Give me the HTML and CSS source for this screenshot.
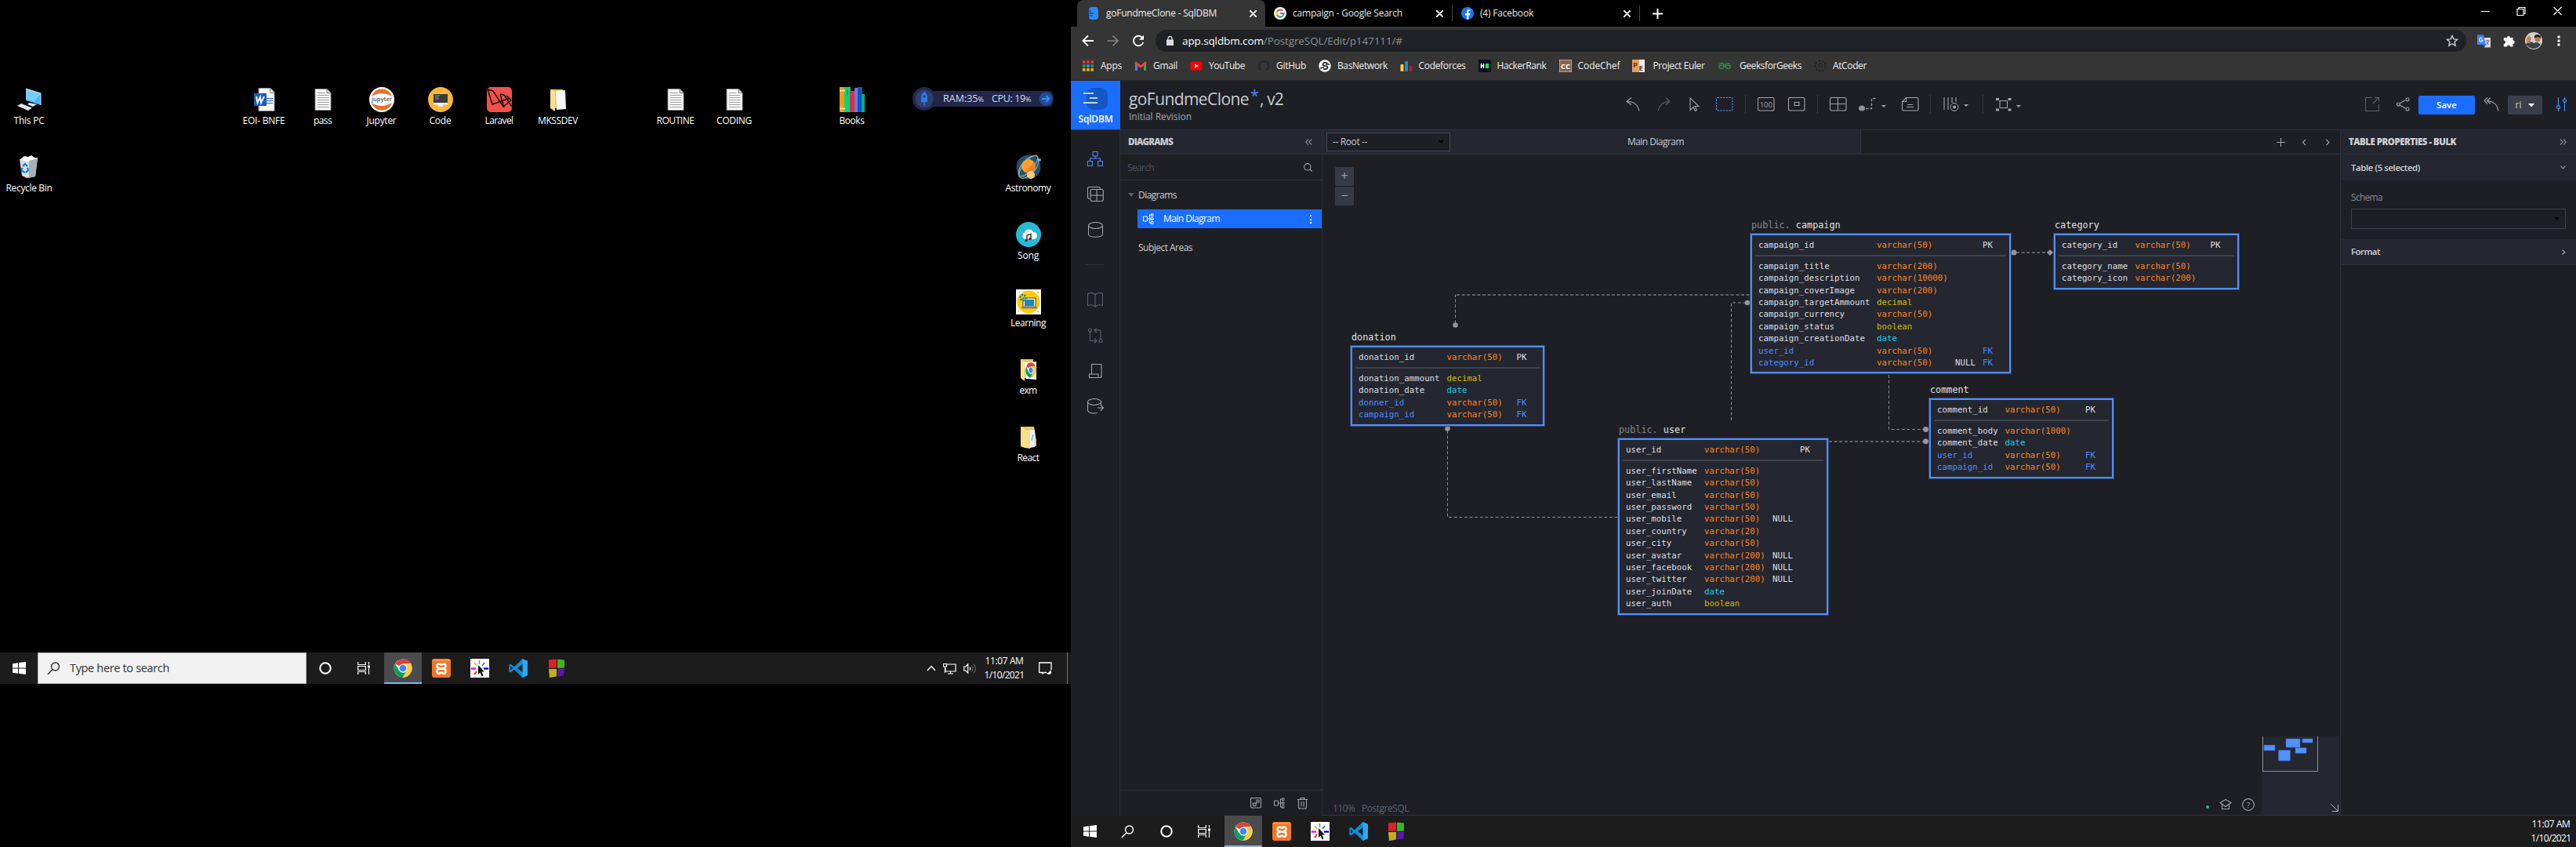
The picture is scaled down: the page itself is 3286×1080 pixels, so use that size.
FILE: index.html
```html
<!DOCTYPE html>
<html lang="en">
<head>
<meta charset="utf-8">
<title>goFundmeClone - SqlDBM</title>
<link rel="stylesheet" href="styles.css">
</head>
<body>
<svg class="defs" aria-hidden="true">
  <symbol id="i-file" viewBox="0 0 32 32"><path d="M6 2.500h15l5 5v22H6z" fill="#fafafa" stroke="#8a8a8a"/><path d="M21 2.500v5h5" fill="#ddd" stroke="#777"/><path d="M8.500 7.500h10M8.500 10.500h15M8.500 13.500h15M8.500 16.500h15M8.500 19.500h15M8.500 22.500h15M8.500 25.500h15" stroke="#9a9a9a"/></symbol>
  <symbol id="i-win" viewBox="0 0 17 16"><path d="M0 2.300 7 1.300v6.300H0zM8 1.100 17 0v7.600H8zM0 8.500h7v6.300L0 13.800zM8 8.500h9V16l-9-1.200z" fill="#fff"/></symbol>
  <symbol id="i-mag" viewBox="0 0 17 17"><circle cx="10.500" cy="6" r="5" fill="none" stroke="currentColor" stroke-width="1.400"/><path d="M7 9.700.8 16" stroke="currentColor" stroke-width="1.400"/></symbol>
  <symbol id="i-ring" viewBox="0 0 16 16"><circle cx="8" cy="8" r="6.700" fill="none" stroke="#fff" stroke-width="2"/></symbol>
  <symbol id="i-task" viewBox="0 0 16 16"><path d="M.7 0v3.500h9.600V0M.7 16v-3.500h9.600V16M.7 5.500h9.600v5H.7zM14.500 0v3.500M14.500 8v8" fill="none" stroke="#fff" stroke-width="1.200"/><path d="M13 4.500h3v3h-3z" fill="#fff"/></symbol>
  <symbol id="i-chrome" viewBox="0 0 24 24"><circle cx="12" cy="12" r="11.500" fill="#fff"/><path d="M12 12 2 6.200A11.500 11.500 0 0 1 22 6.200H12z" fill="#db4437"/><path d="M12 6.200h10A11.500 11.500 0 0 1 11.500 23.500L17 15z" fill="#ffcd40"/><path d="M2 6.200 7 15l5 2.800-2 5.500A11.500 11.500 0 0 1 2 6.200z" fill="#0f9d58"/><path d="M7 15c2 3.500 7 4 10 0l-5.500 8.500-1.500-.2z" fill="#0f9d58"/><circle cx="12" cy="12" r="5.500" fill="#f1f1f1"/><circle cx="12" cy="12" r="4.300" fill="#4285f4"/></symbol>
  <symbol id="i-xampp" viewBox="0 0 24 24"><rect width="24" height="24" rx="3" fill="#f37623"/><path d="M1 2h22" stroke="#ffa05c" stroke-width="1.500"/><path d="M12 12.500C9 12.500 6.500 12 6.500 9.500S8 6.500 9 6.500s2 1 3 1 2-1 3-1 2.500.5 2.500 3-2.500 3-5.500 3zM12 12.500c-3 0-5.500.5-5.500 3s1.500 3.500 2.500 3.500 2-1.500 3-1.500 2 1.500 3 1.500 2.500-1 2.500-3.500-2.500-3-5.500-3z" fill="#f37623" stroke="#fff" stroke-width="2.600" stroke-linejoin="round"/></symbol>
  <symbol id="i-click" viewBox="0 0 24 24"><path fill="#fff" d="M0 0h24v24H0z"/><path d="M11.500 2v5" stroke="#6a9a9a" stroke-width="1.600"/><path d="m5 5 3 4" stroke="#cc2" stroke-width="2"/><path d="m18 5-3 4" stroke="#476" stroke-width="1.600"/><path d="M1 12.500h6" stroke="#f0f" stroke-width="2.400"/><path d="M17 12.500h6" stroke="#00f" stroke-width="2.400"/><path d="m5 20 3-4" stroke="#e22" stroke-width="2"/><path d="M10 8v12l2.500-2.500 2 5 2-1-2-5H18z" fill="#111"/></symbol>
  <symbol id="i-code" viewBox="0 0 24 24"><path d="M17.500 0 24 3v18l-6.500 3L7 13.800 2.300 17.500.3 16.300v-8.600l2-1.200L7 10.200zM18 6.500 11 12l7 5.500zM2.300 9.200v5.600L5 12z" fill="#0f8bd8" fill-rule="evenodd"/><path d="M17.500 0 24 3v18l-6.500 3z" fill="#2ba7f3"/></symbol>
  <symbol id="i-blocks" viewBox="0 0 22 24"><path d="M1 1.500 11 .5v11L1 12z" fill="#d22"/><path d="m12 .5 9 1v10l-9 .5z" fill="#3bb520"/><path d="M1 13h10v9.500L2 24z" fill="#c0b020"/><path d="M12 13l9-.5-1 9-8 1z" fill="#5a16b8"/></symbol>
  <symbol id="i-flow" viewBox="0 0 14 14"><path d="M.5 4h5v6h-5zM5.500 7H9M8.500 1.500v11M8.500 2H10M8.500 12H10M9 7h1.500M10.500.8h2.500v2.700h-2.500zM10.500 5.700h2.500v2.700h-2.500zM10.500 10.500h2.500v2.700h-2.500z" fill="none" stroke="currentColor"/></symbol>
</svg>

<div class="monitors">
  <section class="desktop">
    <div class="icons">
      <div class="ico c1 r1"><svg viewBox="0 0 32 32"><path d="m12 2 19 6v15l-19-6z" fill="#49b5fb"/><path d="m12 2 19 6-8 10.500-11-3z" fill="#79cbff"/><path d="m12 2 19 6v15" fill="none" stroke="#d9e6ee"/><path d="m1 24 5-3 14 5.500-5 3.500zM16 20l10 2-5 3-7-3z" fill="#dfe3e6"/></svg><span data-w="39">This PC</span></div>
      <div class="ico c1 r2"><svg viewBox="0 0 32 32"><path d="m4 6 23-2-3 24-11 2-6-3z" fill="#d9dde0"/><path d="m5 6 5-4 5 1 4-2 4 3 4 1-5 3-10 1z" fill="#f6f7f8"/><path d="m16 8 11-3-3 23-8 2z" fill="#aab0b4"/><path d="m8 15 3-3 3 3M7 17v4l4 2M12 23l3-3-1-3" fill="none" stroke="#1583dd" stroke-width="2.400"/></svg><span data-w="59">Recycle Bin</span></div>
      <div class="ico c5 r1"><svg viewBox="0 0 32 32"><path d="M9 1.500h15l5 5v24H9z" fill="#fafafa" stroke="#8a8a8a"/><path d="M23.500 1.500v6H29" fill="#ddd" stroke="#888"/><path d="M16 14.500h11M16 17.500h11M16 20.500h11" stroke="#2a5cb8"/><path d="M3 8h16v16H3z" fill="#1e5bbd"/><path d="m6 12 1.500 8L11 12.500l1 7.500 4-8" fill="none" stroke="#fff" stroke-width="1.800"/></svg><span data-w="54">EOI- BNFE</span></div>
      <div class="ico c6 r1"><svg><use href="#i-file"/></svg><span data-w="23">pass</span></div>
      <div class="ico c7 r1"><svg viewBox="0 0 32 32"><circle cx="16" cy="16" r="16" fill="#fff"/><path d="M3 12a13.500 13.500 0 0 1 26 0Q16 4 3 12zM3 20a13.500 13.500 0 0 0 26 0Q16 28 3 20z" fill="#e8722a"/><text x="16" y="18" text-anchor="middle" font-size="7.500" font-weight="600" fill="#555">jupyter</text></svg><span data-w="38">Jupyter</span></div>
      <div class="ico c8 r1"><svg viewBox="0 0 32 32"><circle cx="16" cy="16" r="16" fill="#f6b73c"/><path d="M7 9h18v11H7z" fill="#3b3b3b"/><path d="M9 11h6M9 13h4M9 15h5" stroke="#aaa" stroke-width=".8"/><path d="M7 20h18v2.500h-6V25h-6v-2.500H7z" fill="#eee"/></svg><span data-w="28">Code</span></div>
      <div class="ico c9 r1"><svg viewBox="0 0 32 32"><rect width="32" height="32" rx="5" fill="#f4504a"/><path d="m1 3 6 19 23-8M1 3l7 2 13 20 10-8M17 9l5 17M17 9l5 1 10 15M25 11l6 6" fill="none" stroke="#16090a" stroke-width="1.500"/></svg><span data-w="36">Laravel</span></div>
      <div class="ico c10 r1"><svg viewBox="0 0 32 32"><path d="M6 3h16v24H6z" fill="#e8c55e"/><path d="m13 5 12-1 1 24-12 1z" fill="#f4f5f6"/><path d="m6 3 6 3v25l-6-4z" fill="#fbe08c"/></svg><span data-w="51">MKSSDEV</span></div>
      <div class="ico c12 r1"><svg><use href="#i-file"/></svg><span data-w="48">ROUTINE</span></div>
      <div class="ico c13 r1"><svg><use href="#i-file"/></svg><span data-w="45">CODING</span></div>
      <div class="ico c15 r1"><svg viewBox="0 0 32 32"><path d="M0 0h7v32H0z" fill="#ff9811"/><path d="M6 0h8v32H6z" fill="#00d67c"/><path d="M13 5h7v27h-7z" fill="#d9304a"/><path d="M19 1h5v31h-5z" fill="#7577e0"/><path d="M23 0h6v32h-6z" fill="#0c53bd"/><path d="M28 9h4v23h-4z" fill="#02af8e"/><path d="M0 4.500h7M0 27.500h7" stroke="#ffe2a0" stroke-width="2"/><path d="M10 4v7" stroke="#079b8a" stroke-width="2"/></svg><span data-w="32">Books</span></div>
      <div class="ico c18 r2"><svg viewBox="0 0 32 32"><circle cx="16" cy="16" r="15.500" fill="#23506b"/><g fill="none" stroke="#a8b7bf"><ellipse cx="16" cy="16" rx="17" ry="9" transform="rotate(-50 16 16)"/><ellipse cx="17" cy="15" rx="17" ry="6" transform="rotate(-50 16 16)"/></g><circle cx="16" cy="15" r="9" fill="#fba12b"/><path d="M23 10a9 9 0 0 1-11 13z" fill="#df8430"/><circle cx="19" cy="26" r="5" fill="#fcca6d"/><circle cx="30" cy="7" r="2" fill="#37b8e8"/><circle cx="8" cy="27" r="1.500" fill="#2fae4c"/></svg><span data-w="58">Astronomy</span></div>
      <div class="ico c18 r3"><svg viewBox="0 0 32 32"><circle cx="16" cy="16" r="16" fill="#27b8d8"/><path d="M11 22a5 5 0 0 1 0-9 6 6 0 0 1 11 0 4.500 4.500 0 0 1 1 9z" fill="#fff"/><path d="M14 24v-7l5-1.500v6" fill="none" stroke="#333" stroke-width="1.500"/><circle cx="13" cy="23.500" r="1.700" fill="#333"/><circle cx="18" cy="21.500" r="1.700" fill="#333"/></svg><span data-w="27">Song</span></div>
      <div class="ico c18 r4"><svg viewBox="0 0 32 32"><path d="M0 0h32v32H0z" fill="#f7f7f7"/><circle cx="16" cy="16" r="14.500" fill="#fc0"/><path d="M9 11h16v11H9z" fill="#f2f2f2" stroke="#444"/><path d="M11 13h12v8H11z" fill="#1a8ab5"/><path d="M7 22h20v2.500H7z" fill="#8a8178"/><circle cx="9" cy="10.500" r="3.500" fill="none" stroke="#1585bd" stroke-width="2.500" stroke-dasharray="2.200 1.300"/><path d="M4 3h1M27 4h2M3 28h1M27 28h2" stroke="#fc0" stroke-width="2"/></svg><span data-w="45">Learning</span></div>
      <div class="ico c18 r5"><svg viewBox="0 0 32 32"><path d="M6 3h16v24H6z" fill="#e8c55e"/><path d="m11 7 15-1v23l-13-1z" fill="#fff"/><svg x="12" y="7" width="14" height="20" preserveAspectRatio="none" viewBox="0 0 24 24" class="nested"><use href="#i-chrome"/></svg><path d="m6 3 5 3v25l-5-4z" fill="#fbe08c"/></svg><span data-w="22">exm</span></div>
      <div class="ico c18 r6"><svg viewBox="0 0 32 32"><path d="M6 3h17l3 17v8H6z" fill="#e8c566"/><path d="M17 7h7v22l-6 1z" fill="#eef0f2"/><path d="m22 13-2 8" stroke="#2a9fd8"/><path d="m6 3 7 4 5 1v23l-7-1-5-2z" fill="#fbe08c"/></svg><span data-w="28">React</span></div>
      <div class="monitor-pill">
        <svg viewBox="0 0 30 30" class="rocket"><circle cx="15" cy="15" r="15" fill="#22274a"/><circle cx="15" cy="15" r="11.500" fill="#2e3f6b"/><path d="M15 6c3 2 4 5 4 8v5h-8v-5c0-3 1-6 4-8zM14.300 19h1.400v5h-1.400z" fill="#2a7cf5"/><circle cx="15" cy="12" r="1.500" fill="#22304f"/></svg>
        <span class="ram" data-w="52">RAM:35<small>%</small></span><span class="cpu" data-w="50">CPU: 19<small>%</small></span>
        <svg viewBox="0 0 18 18" class="go"><circle cx="9" cy="9" r="8.500" fill="#214c96"/><path d="M4 9h9.500M9.500 5l4 4-4 4" fill="none" stroke="#3a8bff" stroke-width="1.800"/></svg>
      </div>
    </div>
    <footer class="taskbar">
      <span class="tb start"><svg width="17" height="16"><use href="#i-win"/></svg></span>
      <span class="search"><svg width="17" height="17"><use href="#i-mag"/></svg><span data-w="127">Type here to search</span></span>
      <span class="tb"><svg width="16" height="16"><use href="#i-ring"/></svg></span>
      <span class="tb"><svg width="16" height="16"><use href="#i-task"/></svg></span>
      <span class="tb on"><svg width="24" height="24"><use href="#i-chrome"/></svg></span>
      <span class="tb"><svg width="24" height="24"><use href="#i-xampp"/></svg></span>
      <span class="tb"><svg width="24" height="24"><use href="#i-click"/></svg></span>
      <span class="tb"><svg width="24" height="24"><use href="#i-code"/></svg></span>
      <span class="tb"><svg width="22" height="24"><use href="#i-blocks"/></svg></span>
      <span class="tray">
        <svg width="12" height="8" viewBox="0 0 12 8"><path d="m1 7 5-5.500L11 7" fill="none" stroke="#fff" stroke-width="1.300"/></svg>
        <svg width="17" height="15" viewBox="0 0 17 15"><path d="M5 2h11v9H3V7M9.500 11v3M6 14h7M.5 1.500h4v3.500h-4zM2.500 5v8" fill="none" stroke="#fff" stroke-width="1.200"/></svg>
        <svg width="17" height="15" viewBox="0 0 17 15"><path d="M.7 5h2l3-3v11l-3-3h-2zM8 5.500q1.500 2 0 4" fill="none" stroke="#fff" stroke-width="1.200"/><path d="M10.500 3.500q3 4 0 8M13 1.500q4.500 6 0 12" fill="none" stroke="#777"/></svg>
      </span>
      <span class="clock"><span data-w="49">11:07 AM</span><span data-w="51">1/10/2021</span></span>
      <svg class="note" width="17" height="17" viewBox="0 0 17 17"><path d="M10 13.500H7L5 15v-1.500H.7V1H16v9" fill="none" stroke="#fff" stroke-width="1.300"/><path d="M15 10c-1 3-3 4-5 4 1 3 7 3 6-2z" fill="#fff"/></svg>
    </footer>
  </section>

  <section class="browser">
    <header class="tabs">
      <div class="tab active"><svg width="16" height="16" viewBox="0 0 16 16"><rect x="3" width="12" height="16" rx="4" fill="#2b8cf5"/><path d="M0 5h6M2 8h7M1 11h7" stroke="#0c3a80" stroke-width="1.200"/></svg><span data-w="141">goFundmeClone - SqlDBM</span><i class="x"></i></div>
      <div class="tab"><svg width="16" height="16" viewBox="0 0 16 16"><circle cx="8" cy="8" r="8" fill="#fff"/><g fill="none" stroke-width="2"><path d="M11.300 4.800A4.600 4.600 0 0 0 4 6" stroke="#ea4335"/><path d="M4 6a4.600 4.600 0 0 0 0 4" stroke="#fbbc05"/><path d="M4 10a4.600 4.600 0 0 0 7 1.500" stroke="#34a853"/><path d="M11 11.500A4.600 4.600 0 0 0 12.600 8H8" stroke="#4285f4"/></g></svg><span data-w="140">campaign - Google Search</span><i class="x"></i></div>
      <div class="tab"><svg width="16" height="16" viewBox="0 0 16 16"><circle cx="8" cy="8" r="8" fill="#1877f2"/><path d="M7 16v-5.500H5V8h2V6.300C7 4.200 8.200 3 10 3l1.500.1v2h-1C9.500 5.100 9.300 5.700 9.300 6.500V8h2.200l-.4 2.500H9.300V16z" fill="#fff"/></svg><span data-w="68">(4) Facebook</span><i class="x"></i></div>
      <svg class="plus" width="13" height="13" viewBox="0 0 13 13"><path d="M6.500 0v13M0 6.500h13" stroke="#fff" stroke-width="2"/></svg>
      <svg class="winbtns" width="104" height="12" viewBox="0 0 104 12"><path d="M0 6.500h11M46 3.500h8v8h-8zM48 3.500v-2h8v8h-2M92.500 1l10 10M102.500 1l-10 10" fill="none" stroke="#fff" stroke-width="1.200"/></svg>
    </header>
    <div class="addr">
      <svg width="80" height="16" viewBox="0 0 80 16"><path d="M15 8H2M8 1.500 1.500 8 8 14.500" fill="none" stroke="#fff" stroke-width="1.900"/><path d="M32.500 8h13M39.500 1.500 46 8l-6.500 6.500" fill="none" stroke="#858585" stroke-width="1.700"/><path d="M77.500 4.500A6.300 6.300 0 1 0 78.300 10" fill="none" stroke="#fff" stroke-width="1.900"/><path d="M79 .8v6h-6z" fill="#fff"/></svg>
      <div class="omni"><svg width="9" height="12" viewBox="0 0 9 12"><path d="M0 4.500h9V12H0z" fill="#ddd"/><path d="M2 5V3a2.500 2.500 0 0 1 5 0v2" fill="none" stroke="#ddd" stroke-width="1.300"/></svg><span class="url" data-w="281"><b>app.sqldbm.com</b>/PostgreSQL/Edit/p147111/#</span>
        <svg class="star" width="16" height="16" viewBox="0 0 16 16"><path d="m8 1.500 1.900 4.400 4.800.4-3.600 3.200 1.100 4.700L8 11.700l-4.200 2.500 1.100-4.700L1.300 6.300l4.800-.4z" fill="none" stroke="#ccc" stroke-width="1.400"/></svg></div>
      <div class="ext">
        <svg width="17" height="17" viewBox="0 0 17 17"><path d="M7 4h10v12.500H9z" fill="#dadada"/><path d="M0 .5h8L11 13H0z" fill="#4285f4"/><path d="M8 13h3l-2 3.500z" fill="#2a4fc0"/><path d="M6.500 5.200a2.300 2.300 0 1 0 .6 2H5" fill="none" stroke="#fff" stroke-width="1.100"/><path d="M10.500 8h5M13 7v1M14.500 8c-.5 2.500-2 4-3.500 5M11.500 10l3 3" stroke="#667" fill="none"/></svg>
        <svg width="15" height="15" viewBox="0 0 15 15"><path d="M5 3a2 2 0 0 1 4 0h3.500v3.500a2 2 0 0 1 0 4.500v3.500H9a2 2 0 0 0-4 0H.8V11a2 2 0 0 0 0-4.500V3z" fill="#fff"/></svg>
        <svg width="22" height="22" viewBox="0 0 22 22"><circle cx="11" cy="11" r="11" fill="#d8ccc4"/><path d="M1 15q6-5 10-1 5-3 9 2a11 11 0 0 1-19-1z" fill="#3a4450"/><ellipse cx="16" cy="8" rx="3.500" ry="4.500" fill="#b5795a"/><path d="M12 5q3-4 8 0v3q-4-4-8 0z" fill="#1c1715"/><path d="m2 8 3-4 3 4-2 6H2z" fill="#bb8365"/></svg>
        <svg width="4" height="14" viewBox="0 0 4 14"><path d="M.5.500h3v3h-3zM.5 5.500h3v3h-3zM.5 10.500h3v3h-3z" fill="#fff"/></svg>
      </div>
    </div>
    <nav class="marks">
      <a><svg viewBox="0 0 16 16"><path d="M1 3h14" stroke="#e33b2e" stroke-width="3.500" stroke-dasharray="3.500 1.700"/><path d="M1 8h14" stroke="#3a9b4e" stroke-width="3.500" stroke-dasharray="3.500 1.700"/><path d="M1 13h14" stroke="#f3b51c" stroke-width="3.500" stroke-dasharray="3.500 1.700"/><path d="M6.200 6.300h3.400v3.400H6.200z" fill="#4285f4"/></svg><span data-w="27">Apps</span></a>
      <a><svg viewBox="0 0 16 16"><path d="M1 3v11h3V8z" fill="#4285f4"/><path d="M15 3v11h-3V8z" fill="#34a853"/><path d="M1 3.500 8 9l7-5.500" fill="none" stroke="#ea4335" stroke-width="3"/></svg><span data-w="31">Gmail</span></a>
      <a><svg viewBox="0 0 16 16"><rect x=".5" y="2.500" width="15" height="11" rx="2.500" fill="#f00"/><path d="m6.300 5.500 4.400 2.500-4.400 2.500z" fill="#fff"/></svg><span data-w="46">YouTube</span></a>
      <a><svg viewBox="0 0 16 16"><circle cx="8" cy="8" r="7.500" fill="#24292e"/><path d="M5 15v-3C2 10 3 6 4 5.500V3l2 1h4l2-1v2.500c1 1 2 5-1 6.500v3z" fill="#353535"/></svg><span data-w="38">GitHub</span></a>
      <a><svg viewBox="0 0 16 16"><circle cx="8" cy="8" r="7.700" fill="#fff"/><path d="M11.500 4.500Q6 2.500 5.500 6q0 2 3 2t3 2.500Q10 13 6 12M2 11l5-1M9 6h5" fill="none" stroke="#222" stroke-width="1.700"/></svg><span data-w="64">BasNetwork</span></a>
      <a><svg viewBox="0 0 16 16"><rect x=".5" y="6" width="4" height="9" rx="1" fill="#fcd23a"/><rect x="6" y="2" width="4" height="13" rx="1" fill="#1f8dd6"/><rect x="11.500" y="8" width="4" height="7" rx="1" fill="#b01e28"/></svg><span data-w="60">Codeforces</span></a>
      <a><svg viewBox="0 0 16 16"><path d="M0 0h16v16H0z" fill="#0d141e"/><path d="M3.500 5v6M6.500 5v6M3.500 8h3" stroke="#fff" stroke-width="1.500"/><path d="M9 5h4v6H9z" fill="#1fe06c"/></svg><span data-w="63">HackerRank</span></a>
      <a><svg viewBox="0 0 16 16"><path d="M0 0h16v16H0z" fill="#8a6450" stroke="#ddd"/><text x="8" y="11.500" text-anchor="middle" font-size="9.500" font-weight="bold" fill="#fff">CC</text></svg><span data-w="54">CodeChef</span></a>
      <a><svg class="pe" viewBox="0 0 16 16"><path d="M0 0h16v16H0z" fill="#e8a060"/><path d="M9 0h7v16H9z" fill="#f2ebe5"/><text x="1" y="9.500" font-size="9.500" font-weight="bold" fill="#5b3a26">P</text><text x="8.500" y="14" font-size="9.500" font-weight="bold" fill="#4c3629">E</text></svg><span class="late" data-w="66">Project Euler</span></a>
      <a><svg viewBox="0 0 16 16"><path d="M1.500 5.500q5-2 5.500 1v3q-1 2.500-4 2t-2-4H15q.5 4-2 4t-4-2v-3q.5-3 5.500-1" fill="none" stroke="#2f8d46" stroke-width="1.500"/></svg><span class="late" data-w="79">GeeksforGeeks</span></a>
      <a><svg viewBox="0 0 16 16"><circle cx="8" cy="8" r="6.500" fill="none" stroke="#222" stroke-width="1.500" stroke-dasharray="3 1.500"/><circle cx="8" cy="7" r="2.500" fill="none" stroke="#222"/></svg><span data-w="43">AtCoder</span></a>
    </nav>

    <main class="app">
      <header class="head">
        <div class="logo"><svg width="32" height="30" viewBox="0 0 32 30"><rect x="4" y="1" width="27" height="28" rx="9" fill="#1657c4"/><path d="M0 8h13M8 14h10M0 20h18" stroke="#b8dcff" stroke-width="2"/></svg><span data-w="44">SqlDBM</span></div>
        <div class="title"><h1><span data-w="153">goFundmeClone</span><sup>*</sup><span data-w="30">, v2</span></h1><p data-w="80">Initial Revision</p></div>
        <div class="tools">
          <svg width="18" height="18" viewBox="0 0 18 18"><path d="m7 .5-6 5 6 4M1 5.500q13-1 16 12" class="ln"/></svg>
          <svg width="18" height="18" viewBox="0 0 18 18"><path d="m11 .5 5 5-5 4M16 5.500Q4 5 1 17.500" class="ln dim"/></svg>
          <svg width="13" height="18" viewBox="0 0 13 18"><path d="M1 1v15.500l4-4 2.500 5 2-1-2.500-5h5z" class="ln"/></svg>
          <svg width="22" height="18" viewBox="0 0 22 18"><rect x=".5" y=".5" width="20.500" height="16.500" rx="1" fill="none" stroke="#5a93ff" stroke-dasharray="2.500 1.200"/></svg>
          <i class="vr"></i>
          <svg width="22" height="18" viewBox="0 0 22 18"><rect x=".5" y=".5" width="20.500" height="16.500" rx="2" class="ln"/><text x="10.800" y="12.500" font-size="9.500" text-anchor="middle" fill="#a2a4aa">100</text></svg>
          <svg width="22" height="18" viewBox="0 0 22 18"><path d="M8 6.500h6v4H8z" class="ln"/><rect x=".5" y=".5" width="20.500" height="16.500" rx="2" class="ln"/></svg>
          <i class="vr"></i>
          <svg width="22" height="18" viewBox="0 0 22 18"><path d="M10.500.500v16M.5 8.500h20" class="ln"/><rect x=".5" y=".5" width="20.500" height="16.500" rx="2" class="ln"/></svg>
          <svg width="36" height="18" viewBox="0 0 36 18"><ellipse cx="4" cy="14" rx="4" ry="3.500" fill="#8f939b"/><path d="M9 14.500h7.500V1.500H23" fill="none" stroke="#8f939b" stroke-width="1.300" stroke-dasharray="3.500 2"/><path d="M29 10h6l-3 3z" fill="#a2a4aa"/></svg>
          <svg width="22" height="18" viewBox="0 0 22 18"><path d="M5.500.500H19q2 0 2 2v13q0 1.500-2 1.500H2.500q-2 0-2-1.500V5.500zV5.500H.5M7 9.500h7M6 12.500h9" class="ln"/></svg>
          <i class="vr"></i>
          <svg width="34" height="19" viewBox="0 0 34 19"><path d="M1 1v16M6 1v16M11 1v7M16 1v6" class="ln"/><circle cx="14" cy="13.500" r="5" fill="#1e1f25" stroke="#a2a4aa"/><circle cx="14" cy="13.500" r="2" fill="#a2a4aa"/><path d="M26 10h6l-3 3z" fill="#a2a4aa"/></svg>
          <i class="vr"></i>
          <svg width="32" height="18" viewBox="0 0 32 18"><path d="M5 4.500h9.500v9H5z" class="ln"/><path d="M0 1h4v3H0zM15.500 1h4v3h-4zM0 14.500h4v3H0zM15.500 14.500h4v3h-4zM26 10h6l-3 3z" fill="#a2a4aa"/></svg>
        </div>
        <div class="acts">
          <svg width="18" height="18" viewBox="0 0 18 18"><path d="M9 .500H.5v17h17V9M10 8l7-7.500M12 .500h5.500v5" class="ln dim"/></svg>
          <svg width="17" height="18" viewBox="0 0 17 18"><path d="m4.500 7.800 7-4M4.500 10.200l7 4" class="ln"/><circle cx="2.500" cy="9" r="2" class="ln"/><circle cx="14" cy="2.700" r="2" class="ln"/><circle cx="14" cy="15" r="2" class="ln"/></svg>
          <span class="save">Save</span>
          <svg width="20" height="18" viewBox="0 0 20 18"><path d="M5 .500 1 4.500l4 4M9 .500 4.500 4.500l4.500 4M5 4.500q12 1 14 13" class="ln"/></svg>
          <span class="user">ri<svg width="8" height="5" viewBox="0 0 8 5"><path d="M0 0h8L4 4.500z" fill="#fff"/></svg></span>
          <svg width="13" height="18" viewBox="0 0 13 18"><path d="M2.500 0v11M2.500 14.500V18M10.500 0v2.500M10.500 6v12" stroke="#4a8cff" stroke-width="1.200"/><circle cx="2.500" cy="12.700" r="2" fill="none" stroke="#4a8cff" stroke-width="1.200"/><circle cx="10.500" cy="4.500" r="2" fill="none" stroke="#4a8cff" stroke-width="1.200"/></svg>
        </div>
      </header>
      <div class="body">
        <nav class="rail">
          <svg width="20" height="19" viewBox="0 0 20 19"><path d="M7 .5h6v5.500H7zM.5 12.500h6v6h-6zM13.500 12.500h6v6h-6zM10 6v3M3.500 12.500V9h13v3.500" fill="none" stroke="#4a8cff" stroke-width="1.100"/></svg>
          <svg width="21" height="19" viewBox="0 0 21 19"><path d="M3 15.500q-2.500 0-2.500-2V2.500Q.5.500 2.500.500h12q2 0 2 2.500M12 3.500v15M4 11h16.500" class="ln"/><rect x="4" y="3.500" width="16.300" height="15" rx="2" class="ln"/></svg>
          <svg width="19" height="20" viewBox="0 0 19 20"><ellipse cx="9.500" cy="4.500" rx="9" ry="4" class="ln"/><path d="M.5 4.500v11c0 5 18 5 18 0v-11" class="ln"/></svg>
          <i></i>
          <svg width="20" height="19" viewBox="0 0 20 19"><path d="M10 2.500Q5-1 .5 1.500v15q5-2 9.500 1.500 4.500-3.500 9.500-1.500v-15Q15-1 10 2.500zV18" class="ln dim"/></svg>
          <svg width="19" height="20" viewBox="0 0 19 20"><circle cx="2.500" cy="3" r="2" class="ln dim"/><circle cx="16" cy="16.500" r="2" class="ln dim"/><path d="M2.500 5v11.500h8M8 13.500l3 3-3 3M16 14.500V3H8M11 .500 8 3l3 3" class="ln dim"/></svg>
          <svg width="17" height="18" viewBox="0 0 17 18"><path d="M3.500 12.500V.500h12.500v15q0 2-2 2H.5v-4.500h11.500v3.500" class="ln"/></svg>
          <svg width="21" height="20" viewBox="0 0 21 20"><ellipse cx="9" cy="4.500" rx="8.500" ry="4" class="ln"/><path d="M.5 4.500v11q3 5 12 3M17.500 4.500v4M13 12h7.500M17 8.500l3.500 3.500-3.500 3.500" class="ln"/></svg>
        </nav>
        <aside class="panel">
          <h2><b data-w="57">DIAGRAMS</b><svg width="9" height="8" viewBox="0 0 9 8"><path d="M4 .5 1 4l3 3.500M8 .5 5 4l3 3.500" class="ln"/></svg></h2>
          <div class="find"><span data-w="34">Search</span><svg width="11" height="11" viewBox="0 0 11 11"><circle cx="4.800" cy="4.800" r="4.200" class="ln"/><path d="m8 8 2.700 2.700" class="ln"/></svg></div>
          <div class="tree">
            <p><svg width="8" height="5" viewBox="0 0 8 5"><path d="M0 0h8L4 5z" fill="#5a5e68"/></svg><span data-w="49">Diagrams</span></p>
            <div class="sel"><svg width="14" height="14"><use href="#i-flow"/></svg><span data-w="72">Main Diagram</span><i></i></div>
            <p class="sub"><span data-w="69">Subject Areas</span></p>
          </div>
          <footer>
            <svg width="14" height="14" viewBox="0 0 14 14"><rect x=".5" y=".5" width="13" height="12.500" rx="1.500" class="ln"/><path d="M3.500 7h3.500v3.500H3.500zM8 3h3v3H8zM7 7.500 8.500 6" class="ln"/></svg>
            <svg width="14" height="14"><use href="#i-flow"/></svg>
            <svg width="13" height="15" viewBox="0 0 13 15"><path d="M0 2.500h13M4 2.500v-2h5v2M1.500 2.500v9.500q0 2 2 2h6q2 0 2-2V2.500M5 5v6.500M8 5v6.500" class="ln"/></svg>
          </footer>
        </aside>
        <div class="work">
          <div class="bar">
            <div class="dtab"><span class="root"><span data-w="44">-- Root --</span><svg width="7" height="5" viewBox="0 0 7 5"><path d="M0 0h7L3.500 4z" fill="#000"/></svg></span><span class="name" data-w="72">Main Diagram</span></div>
            <svg width="68" height="11" viewBox="0 0 68 11"><path d="M5.500 0v11M0 5.500h11M37 2l-3.500 3.500L37 9M63.500 2 67 5.500 63.500 9" class="ln"/></svg>
          </div>
          <div class="canvas" id="canvas">
            <div class="zoom"><i>+</i><i>−</i></div>
            <svg class="links" width="1298" height="842" viewBox="1687 197 1298 842">
              <g fill="none" stroke="#8a8c92" stroke-dasharray="4 2.600">
                <path d="M1856.500 412v-36.500"/><path d="M1858 376H2232" stroke-width="2" stroke="#5e6066"/>
                <path d="M2208.500 536v-150H2229"/>
                <path d="M1846.500 549v110.500H2063"/>
                <path d="M2409.500 478v69.500H2456"/>
                <path d="M2333 563H2456M2572 322h42" stroke-width="2" stroke="#5e6066"/>
              </g>
              <g fill="#94969c"><circle cx="1856.500" cy="414.500" r="3.300"/><circle cx="2229" cy="386" r="3.300"/><circle cx="1846.500" cy="546.500" r="3.300"/><circle cx="2456.500" cy="547.500" r="3.500"/><circle cx="2456.500" cy="562.800" r="3.500"/><circle cx="2569" cy="322" r="3.500"/><path d="m2615 318 4 4-4 4-4-4z"/></g>
            </svg>
            <div class="status"><span data-w="28">110%</span><span data-w="60">PostgreSQL</span></div>
            <div class="help"><i></i><svg width="16" height="14" viewBox="0 0 16 14"><path d="m8 .5 7 4-7 5-7-5zM3.500 7v5.500h9V7" class="ln"/></svg><svg width="16" height="16" viewBox="0 0 16 16"><circle cx="8" cy="8" r="7.400" class="ln"/><text x="8" y="11.500" font-size="9.500" text-anchor="middle" fill="#a2a4aa">?</text></svg></div>
            <svg class="mini" width="100" height="100" viewBox="2885 939 100 100"><path d="M2886.500 939v44.500h70V939" fill="none" stroke="#8a8d95"/><g fill="#5090ff" stroke="#3a64ad" stroke-width=".6"><path d="M2888 950h14v7h-14zM2916 942h18v11h-18zM2937 942h13v5h-13zM2928 953.500h14v7h-14zM2906.500 956.500h15v13.500h-15z"/></g><path d="m2973 1025 9 9M2982.500 1026v8.500h-8" fill="none" stroke="#a2a4aa"/></svg>
          </div>
        </div>
        <aside class="props">
          <h2><b data-w="137">TABLE PROPERTIES - BULK</b><svg width="9" height="8" viewBox="0 0 9 8"><path d="M1 .5 4 4 1 7.500M5 .5 8 4 5 7.500" class="ln"/></svg></h2>
          <h3><span data-w="88">Table (5 selected)</span><svg width="7" height="5" viewBox="0 0 7 5"><path d="m.5.500 3 3.500 3-3.500" class="ln"/></svg></h3>
          <div class="field"><label data-w="40">Schema</label><span><svg width="7" height="5" viewBox="0 0 7 5"><path d="M0 0h7L3.500 4z" fill="#000"/></svg></span></div>
          <h3 class="fmt"><span data-w="37">Format</span><svg width="5" height="7" viewBox="0 0 5 7"><path d="M.5.500 4 3.500l-3.500 3" class="ln"/></svg></h3>
        </aside>
      </div>
    </main>
    <footer class="taskbar">
      <span class="tb start"><svg width="17" height="16"><use href="#i-win"/></svg></span>
      <span class="tb"><svg width="17" height="17"><use href="#i-mag"/></svg></span>
      <span class="tb"><svg width="16" height="16"><use href="#i-ring"/></svg></span>
      <span class="tb"><svg width="16" height="16"><use href="#i-task"/></svg></span>
      <span class="tb on"><svg width="24" height="24"><use href="#i-chrome"/></svg></span>
      <span class="tb"><svg width="24" height="24"><use href="#i-xampp"/></svg></span>
      <span class="tb"><svg width="24" height="24"><use href="#i-click"/></svg></span>
      <span class="tb"><svg width="24" height="24"><use href="#i-code"/></svg></span>
      <span class="tb"><svg width="22" height="24"><use href="#i-blocks"/></svg></span>
      <span class="clock last"><span data-w="49">11:07 AM</span><span data-w="51">1/10/2021</span></span>
    </footer>
  </section>
</div>
<script src="app.js"></script>
</body>
</html>
```
FILE: styles.css
```css
* { box-sizing: border-box; margin: 0; padding: 0; }
body { width: 3286px; height: 1080px; overflow: hidden; background: #000; font: 12px/16px "Open Sans", "Noto Sans", sans-serif; color: #fff; }
svg { display: block; flex: none; }
[data-w] { white-space: pre; }
.defs { position: absolute; width: 0; height: 0; }
.monitors { display: flex; height: 1080px; }
.ln { fill: none; stroke: #a2a4aa; stroke-width: 1.100; }
.dim { stroke: #5d606a; }

/* secondary monitor */
.desktop { width: 1366px; height: 872px; display: flex; flex-direction: column; }
.icons { flex: 1; display: grid; grid-template-columns: 74px repeat(17, 75px); grid-template-rows: repeat(6, 86px); padding: 111px 0 0; align-content: start; }
.ico { display: flex; flex-direction: column; align-items: center; gap: 3px; }
.ico > svg { width: 32px; height: 32px; }
.c1 { grid-column: 1; } .c5 { grid-column: 5; } .c6 { grid-column: 6; } .c7 { grid-column: 7; } .c8 { grid-column: 8; }
.c9 { grid-column: 9; } .c10 { grid-column: 10; } .c12 { grid-column: 12; } .c13 { grid-column: 13; } .c15 { grid-column: 15; } .c18 { grid-column: 18; }
.r1 { grid-row: 1; } .r2 { grid-row: 2; } .r3 { grid-row: 3; } .r4 { grid-row: 4; } .r5 { grid-row: 5; } .r6 { grid-row: 6; }
.monitor-pill { grid-column: 16 / span 3; grid-row: 1; margin-left: 40px; width: 180px; height: 30px; display: flex; align-items: center; color: #d5dcec; font-size: 12.500px; background: linear-gradient(#22274a, #22274a) 12px 5px / 168px 20px no-repeat; border-radius: 15px; }
.monitor-pill small { font-size: 9px; }
.rocket { width: 30px; height: 30px; }
.ram { margin-left: 9px; width: 62px; }
.cpu { width: 60px; }
.go { width: 18px; height: 18px; }

.taskbar { height: 40px; background: #1c1c1c; display: flex; align-items: center; flex: none; }
.tb { width: 48px; margin-right: 1px; height: 40px; display: flex; align-items: center; justify-content: center; }
.start { margin-right: 0; }
.on { background: #4b4b4b; border-bottom: 2px solid #76b9ed; padding-top: 2px; margin-left: 1px; }
.search { width: 343px; height: 40px; background: #f1f1f1; border: 1px solid #b5b5b5; display: flex; align-items: center; gap: 12px; padding-left: 11px; color: #333; font-size: 14.500px; }
.tray { display: flex; align-items: center; gap: 9px; margin-left: auto; }
.clock { display: flex; flex-direction: column; align-items: center; line-height: 18px; margin-left: 9px; width: 52px; }
.note { margin: 0 20px 0 18px; }
.desktop .taskbar { border-right: 4px solid #1c1c1c; box-shadow: inset -1px 0 #777; }
.last { margin: 0 6px 0 auto; }

/* browser chrome */
.browser { width: 1920px; height: 1080px; display: flex; flex-direction: column; background: #353535; }
.browser .tb { margin-right: .8px; }
.tabs { height: 34px; background: #000; display: flex; align-items: center; padding-left: 8px; flex: none; }
.tab { width: 239px; height: 20px; padding: 0 11px; display: flex; align-items: center; gap: 9px; border-right: 1px solid #444; color: #e4e4e4; }
.tab.active { height: 34px; width: 240px; background: #353535; border: 0; border-radius: 8px 8px 0 0; color: #eee; padding-left: 12px; }
.tab + .tab { padding-left: 11px; gap: 8px; }
.x { margin-left: auto; width: 9px; height: 9px; background: linear-gradient(45deg, transparent 44%, #ddd 44% 56%, transparent 56%), linear-gradient(-45deg, transparent 44%, #ddd 44% 56%, transparent 56%); }
.plus { margin-left: 16px; }
.winbtns { margin: -6px 17px 0 auto; }
.addr { height: 36px; display: flex; align-items: center; padding-left: 14px; flex: none; }
.omni { width: 1672px; height: 28px; margin-left: 14px; border-radius: 14px; background: #202124; display: flex; align-items: center; padding: 0 10px 0 14px; gap: 11px; font-size: 13.500px; color: #8d9094; }
.omni b { font-weight: 400; color: #fff; }
.star { margin-left: auto; }
.ext { display: grid; grid-template-columns: 33px 28px 41px 10px; align-items: center; margin-left: 14px; }
.marks { height: 33px; border-bottom: 1px solid #232427; display: grid; align-items: center; flex: none; padding: 0 0 4px 14px; grid-template-columns: 67px 71px 86px 78px 103.500px 100px 103px 93px 110.500px 122px 80px; color: #eee; }
.marks a { display: flex; align-items: center; gap: 8px; }
.marks svg { width: 16px; height: 16px; }
.pe { overflow: visible; }
.late { margin-left: 3px; }

/* modelling application */
.app { height: 937px; display: flex; flex-direction: column; background: #1e1f25; color: #c8cacf; }
.head { height: 63px; display: flex; border-bottom: 1px solid #30333e; flex: none; }
.logo { width: 63px; background: #1b6dff; display: flex; flex-direction: column; align-items: center; padding-top: 8px; gap: 3px; font: 600 12px/16px "Open Sans", sans-serif; color: #fff; }
.title { width: 645px; padding: 9px 0 0 11px; }
.title h1 { font-weight: 400; font-size: 21px; line-height: 28px; display: flex; }
.title sup { color: #4a8cff; width: 14px; padding-left: 2px; font-size: 20px; line-height: 20px; }
.title p { line-height: 16px; margin-top: 1px; width: max-content; color: #a5a7ad; }
.tools, .acts { display: grid; align-items: center; height: 59px; }
.tools { grid-template-columns: 40px 41px 34px 37px 16px 39px 37px 16px 37px 55px 36px 17px 50px 17px 40px; }
.vr { width: 1px; height: 24px; background: #33363f; }
.acts { margin-left: auto; grid-template-columns: 40px 28px 83px 31px 62px 25px; }
.save, .user { height: 24px; border-radius: 2px; display: flex; align-items: center; justify-content: center; margin-top: 3px; }
.save { width: 72px; background: #1b6dff; color: #fff; font-weight: 600; font-size: 11.500px; }
.user { width: 44px; background: #3a3e49; gap: 9px; }
.body { flex: 1; display: flex; min-height: 0; }
.rail { width: 63px; border-right: 1px solid #2c2f38; display: grid; grid-auto-rows: 45.100px; padding-top: 14px; justify-items: center; align-items: center; align-content: start; }
.rail i { width: 24px; height: 1px; background: #30333e; }
.panel { width: 258px; border-right: 1px solid #2c2f38; display: flex; flex-direction: column; }
.panel h2, .props h2 { height: 31px; background: #242730; display: flex; align-items: center; justify-content: space-between; padding: 0 12px 0 10px; font-size: 11.500px; border-bottom: 1px solid #292c36; }
.find { height: 33px; border-bottom: 1px solid #30333e; display: flex; justify-content: space-between; align-items: center; padding: 1px 12px 0 9px; color: #4d515c; }
.tree { flex: 1; padding-top: 9px; color: #cdced2; }
.tree p { height: 19px; display: flex; align-items: center; padding-left: 10px; gap: 5px; }
.tree .sub { padding-left: 23px; margin-top: 15px; }
.sel { margin: 9px 0 0 22px; height: 24px; background: #1b6dff; display: flex; align-items: center; padding: 0 13px 0 7px; gap: 12px; color: #fff; }
.sel i { margin-left: auto; width: 2px; height: 11px; background: repeating-linear-gradient(#fff 0 2px, transparent 2px 4.500px); }
.panel footer { height: 33px; border-top: 1px solid #30333e; display: flex; align-items: center; justify-content: flex-end; gap: 16px; padding-right: 18px; color: #a2a4aa; }
.work { width: 1299px; display: flex; flex-direction: column; border-right: 1px solid #2c2f38; border-bottom: 1px solid #30333e; }
.bar { height: 31px; border-bottom: 1px solid #30333e; display: flex; align-items: center; justify-content: space-between; padding-right: 13px; }
.dtab { width: 687px; height: 30px; background: #242730; border-right: 1px solid #30333e; display: flex; align-items: center; padding-left: 5px; }
.root { width: 158px; flex: none; height: 24px; border: 1px solid #444956; background: #1e1f25; display: flex; align-items: center; justify-content: space-between; padding: 0 7px; }
.name { margin-left: 226px; }
.canvas { position: relative; flex: 1; overflow: hidden; }
.zoom { position: absolute; left: 16px; top: 16px; display: grid; gap: 1px; }
.zoom i { width: 24px; height: 24px; background: #363a45; border-radius: 1px; font: 400 16px/23px "Open Sans", sans-serif; text-align: center; color: #9a9da5; }
.links { position: absolute; left: 0; top: 0; }
.status { position: absolute; left: 13px; bottom: 0; display: flex; gap: 9px; color: #5b5f6b; }
.help { position: absolute; right: 109px; bottom: 5px; display: flex; align-items: center; gap: 13px; }
.help i { width: 4px; height: 4px; border-radius: 2px; background: #16c47f; margin: 5px 0 0; }
.mini { position: absolute; right: 0; bottom: 0; background: #242730; }
.props { flex: 1; color: #cfd0d4; border-bottom: 1px solid #30333e; }
.props h2 { padding-right: 12px; }
.props h3 { height: 33px; background: #242730; display: flex; align-items: center; justify-content: space-between; padding: 0 13px; font: 600 11.500px/16px "Open Sans", sans-serif; }
.props .fmt { border-bottom: 1px solid #30333e; }
.field { padding: 14px 13px 13px; height: 75px; color: #85888f; }
.field span { display: flex; height: 26px; border: 1px solid #3d414c; margin-top: 6px; align-items: center; justify-content: flex-end; padding-right: 7px; }
.field label { display: block; width: max-content; }

/* entities on the diagram */
.entity { position: absolute; border: 2px solid #5090ff; box-shadow: 0 0 0 1px #2f4675; background: #242730; padding: 4.800px 4px 0; font: 10.750px/15.400px "DejaVu Sans Mono", monospace; color: #dedfe2; white-space: pre; }
.entity h4 { position: absolute; left: -1px; top: -22px; font: 11.800px/18px "DejaVu Sans Mono", monospace; color: #e0e1e4; }
.entity h4 em { font-style: normal; color: #85888f; }
.row { display: grid; padding-left: 4px; }
.entity hr { border: 0; height: 2px; background: #3d414c; margin: 4.800px 0; }
.string { color: #ff8320; } .number { color: #d0bb00; } .date { color: #19cfe6; } .fk > :not(.string):not(.null) { color: #4a8cff; }
```
FILE: app.js
```js
// Entities: canvas position and size, column offsets for type / null / key, then the rows.
const entities = [
  { schema: 'public', name: 'campaign', x: 546, y: 101, w: 332, h: 178, cols: [151, 100, 35], rows: [
    ['campaign_id', 'varchar(50)', '', 'PK'], ['campaign_title', 'varchar(200)'], ['campaign_description', 'varchar(10000)'],
    ['campaign_coverImage', 'varchar(200)'], ['campaign_targetAmmount', 'decimal'], ['campaign_currency', 'varchar(50)'],
    ['campaign_status', 'boolean'], ['campaign_creationDate', 'date'], ['user_id', 'varchar(50)', '', 'FK'], ['category_id', 'varchar(50)', 'NULL', 'FK']] },
  { name: 'category', x: 933, y: 101, w: 236, h: 71, cols: [93.5, 60, 36], rows: [
    ['category_id', 'varchar(50)', '', 'PK'], ['category_name', 'varchar(50)'], ['category_icon', 'varchar(200)']] },
  { name: 'comment', x: 774, y: 311, w: 235, h: 102, cols: [86.5, 70, 32.5], rows: [
    ['comment_id', 'varchar(50)', '', 'PK'], ['comment_body', 'varchar(1000)'], ['comment_date', 'date'],
    ['user_id', 'varchar(50)', '', 'FK'], ['campaign_id', 'varchar(50)', '', 'FK']] },
  { schema: 'public', name: 'user', x: 377, y: 362, w: 268, h: 225, cols: [100, 87, 35], rows: [
    ['user_id', 'varchar(50)', '', 'PK'], ['user_firstName', 'varchar(50)'], ['user_lastName', 'varchar(50)'], ['user_email', 'varchar(50)'],
    ['user_password', 'varchar(50)'], ['user_mobile', 'varchar(50)', 'NULL'], ['user_country', 'varchar(20)'], ['user_city', 'varchar(50)'],
    ['user_avatar', 'varchar(200)', 'NULL'], ['user_facebook', 'varchar(200)', 'NULL'], ['user_twitter', 'varchar(200)', 'NULL'],
    ['user_joinDate', 'date'], ['user_auth', 'boolean']] },
  { name: 'donation', x: 36, y: 244, w: 247, h: 102, cols: [112.5, 60, 29], rows: [
    ['donation_id', 'varchar(50)', '', 'PK'], ['donation_ammount', 'decimal'], ['donation_date', 'date'],
    ['donner_id', 'varchar(50)', '', 'FK'], ['campaign_id', 'varchar(50)', '', 'FK']] },
];

const kind = type => type.startsWith('varchar') ? 'string' : type === 'date' ? 'date' : 'number';
const canvas = document.getElementById('canvas');

for (const e of entities) {
  const grid = e.cols.map(c => c + 'px').join(' ') + ' 1fr';
  const rows = e.rows.map(([name, type, nul = '', key = '']) =>
    `<div class="row ${key === 'FK' ? 'fk' : ''}" style="grid-template-columns:${grid}"><span>${name}</span><span class="${kind(type)}">${type}</span><span class="null">${nul}</span><span>${key}</span></div>`);
  canvas.insertAdjacentHTML('beforeend',
    `<section class="entity" style="left:${e.x}px;top:${e.y}px;width:${e.w}px;height:${e.h}px"><h4>${e.schema ? `<em>${e.schema}. </em>` : ''}${e.name}</h4>${rows[0]}<hr>${rows.slice(1).join('')}</section>`);
}

// Track each label so that it fills its intended width.
for (const el of document.querySelectorAll('[data-w]')) {
  const range = document.createRange();
  range.selectNodeContents(el);
  const natural = range.getBoundingClientRect().width;
  el.style.letterSpacing = (el.dataset.w - natural) / el.textContent.length + 'px';
}
```
